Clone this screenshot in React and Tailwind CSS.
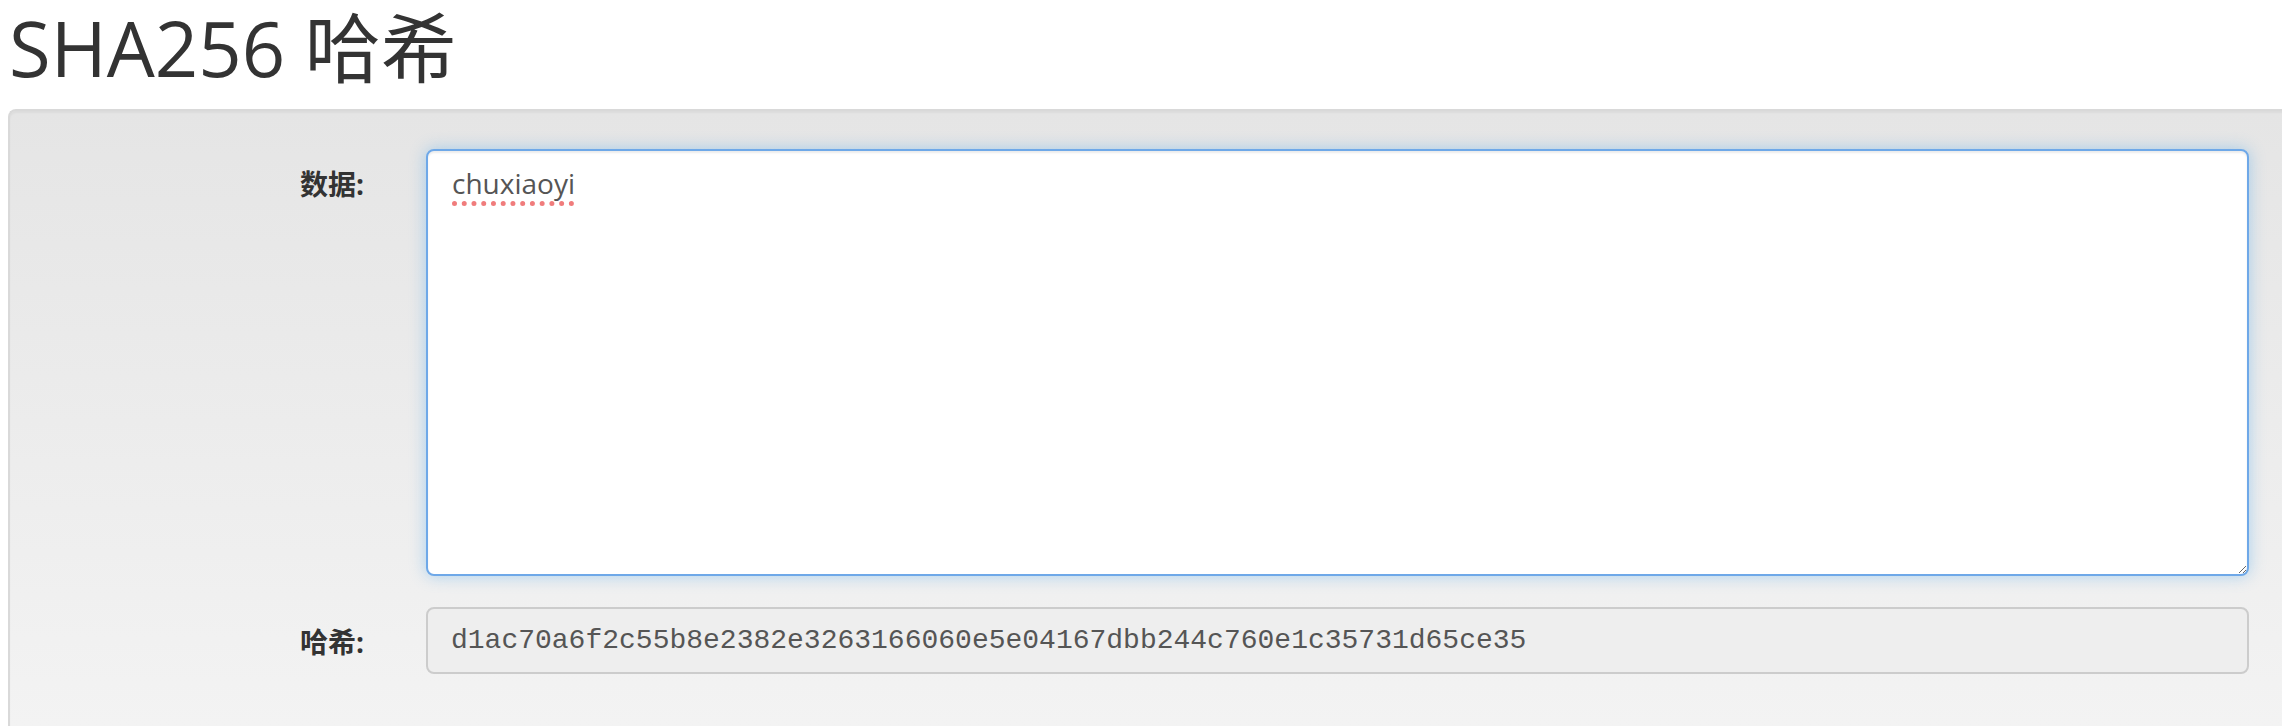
import React from "react";

const hash = "d1ac70a6f2c55b8e2382e3263166060e5e04167dbb244c760e1c35731d65ce35";

const App = () => {
  return (
    <div
      className="h-screen overflow-hidden bg-white flex flex-col text-[#333]"
      style={{ fontFamily: '"Open Sans", "Noto Sans CJK SC", sans-serif' }}
    >
      {/* Title */}
      <div className="shrink-0 h-[96px] pl-[9px]">
        <h1 className="inline-block text-[76px] leading-[96px] font-normal text-[#333] whitespace-nowrap">
          SHA256 哈希
        </h1>
      </div>

      {/* Form panel */}
      <div className="mt-[13px] ml-[8px] mr-[-40px] flex-1 rounded-tl-[8px] border-t-2 border-l-2 border-[#d9d9d9] bg-linear-to-b from-[#e5e5e5] to-[#f3f3f3] shadow-[inset_0_2px_2px_rgba(0,0,0,0.04)]">
        <div className="pt-[38px] pr-[73px] flex flex-col gap-[31px]">
          {/* 数据 */}
          <div className="flex gap-[62px]">
            <label className="w-[354px] shrink-0 pt-[15px] text-right text-[28px] leading-[40px] font-bold text-[#333]">
              数据:
            </label>
            <textarea
              defaultValue="chuxiaoyi"
              className="flex-1 h-[427px] rounded-[8px] border-2 border-[#6ea8e8] bg-white px-[24px] pt-[12px] text-[28px] leading-[40px] text-[#555] outline-none shadow-[0_0_16px_rgba(82,168,236,0.45),inset_0_2px_2px_rgba(0,0,0,0.075)] underline decoration-dotted decoration-[#f07c7c] decoration-[5px] underline-offset-[7px]"
              style={{ fontFamily: '"Open Sans", sans-serif' }}
            />
          </div>

          {/* 哈希 */}
          <div className="flex gap-[62px]">
            <label className="w-[354px] shrink-0 pt-[15px] text-right text-[28px] leading-[40px] font-bold text-[#333]">
              哈希:
            </label>
            <div
              className="flex-1 h-[67px] flex items-center rounded-[8px] border-2 border-[#cccccc] bg-[#eeeeee] px-[23px] text-[28px] text-[#555] whitespace-nowrap"
              style={{ fontFamily: '"Liberation Mono", monospace' }}
            >
              {hash}
            </div>
          </div>
        </div>
      </div>
    </div>
  );
};

export default App;
